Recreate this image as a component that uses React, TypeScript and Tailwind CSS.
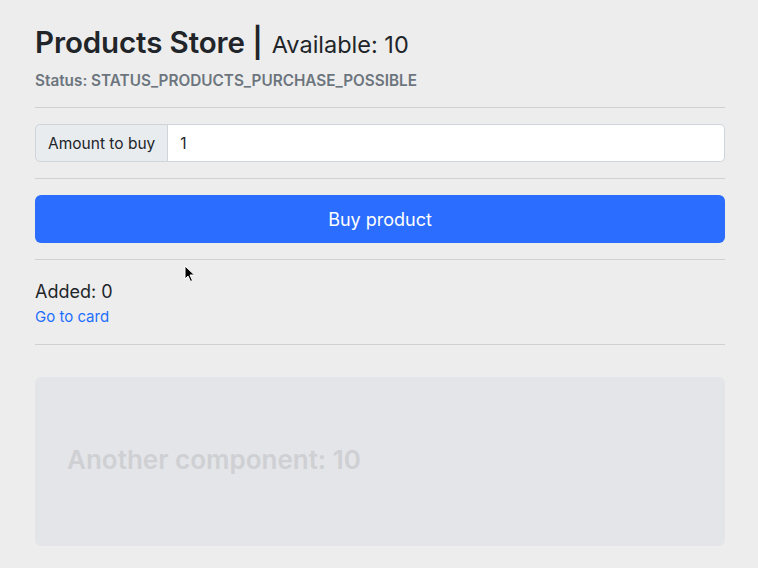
export default function App() {
  return (
    <div
      className="relative min-h-[568px] w-full bg-[#ededed] pl-[35px] pr-[33px] pt-[25px] text-[#212529]"
      style={{ fontFamily: "Inter, 'Liberation Sans', sans-serif" }}
    >
      <h1 className="flex items-baseline gap-[9px] leading-[1.2]">
        <span className="text-[29.5px] font-semibold tracking-[-0.1px]">Products Store |</span>
        <span className="text-[23.5px] font-normal">Available: 10</span>
      </h1>
      <p className="mt-[10px] text-[15.3px] font-semibold text-[#6c757d]">
        Status: STATUS_PRODUCTS_PURCHASE_POSSIBLE
      </p>

      <hr className="mt-[14px] border-[#cfd0d2]" />

      <div className="mt-[16px] flex h-[38px] text-[15.5px]">
        <span className="flex items-center rounded-l-[5px] border border-[#ced4da] bg-[#e9ecef] px-[12px] text-[#212529]">
          Amount to buy
        </span>
        <input
          defaultValue="1"
          className="flex-1 rounded-r-[5px] border border-l-0 border-[#ced4da] bg-white px-[12px] text-[15.5px] outline-none"
        />
      </div>

      <hr className="mt-[16px] border-[#cfd0d2]" />

      <button className="mt-[16px] h-[48px] w-full rounded-[6px] bg-[#2b6dfe] text-[18px] text-white">
        Buy product
      </button>

      <hr className="mt-[16px] border-[#cfd0d2]" />

      <div className="mt-[20px] text-[18px] leading-[1.3]">Added: 0</div>
      <a href="#" className="mt-[2px] block text-[15px] text-[#1d6efd]">
        Go to card
      </a>

      <hr className="mt-[16px] border-[#cfd0d2]" />

      <div className="mt-[32px] flex h-[169px] items-center rounded-[6px] bg-[#e4e5e9] px-[32px] pb-[4px]">
        <span className="text-[26px] font-semibold text-[#cfd0d3]">Another component: 10</span>
      </div>

      <svg className="absolute left-[184px] top-[265px]" width="12" height="18" viewBox="0 0 12 18">
        <path d="M1 1 L1 14 L4 11 L6.5 16.5 L8.5 15.5 L6 10 L10.5 10 Z" fill="#000" stroke="#fff" strokeWidth="1" />
      </svg>
    </div>
  );
}
